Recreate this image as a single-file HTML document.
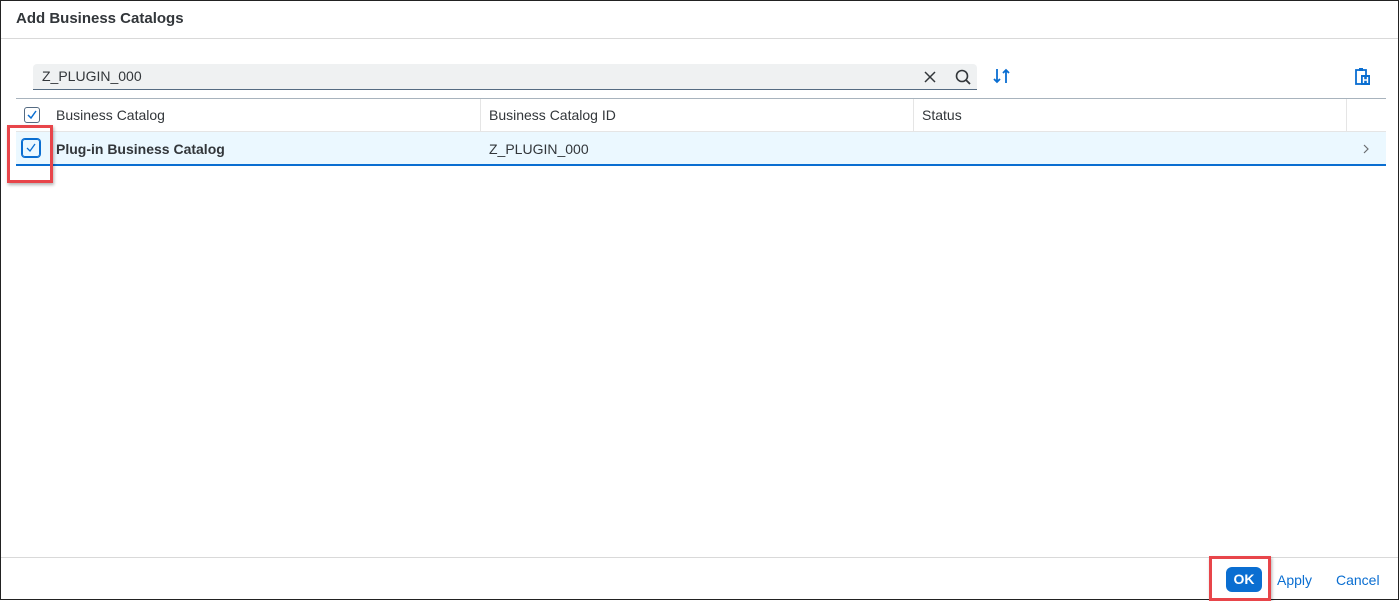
<!DOCTYPE html><html><head><style>
body{margin:0;width:1399px;height:600px;position:relative;background:#fff;font-family:"Liberation Sans",sans-serif;color:#32363a;overflow:hidden}
.a{position:absolute}
</style></head><body>
<div class="a" style="left:0;top:0;width:1397px;height:598px;border:1px solid #222"></div>
<div class="a" style="left:16px;top:10px;font-size:15px;font-weight:bold;color:#32363a">Add Business Catalogs</div>
<div class="a" style="left:1px;top:38px;width:1397px;height:1px;background:#d9d9d9"></div>
<div class="a" style="left:33px;top:64px;width:944px;height:25px;background:#eff1f2;border-bottom:1px solid #556b82;border-radius:4px 4px 0 0"></div>
<div class="a" style="left:42px;top:68px;font-size:14px">Z_PLUGIN_000</div>
<svg class="a" style="left:922px;top:69px" width="16" height="16"><path d="M3 3L13 13M13 3L3 13" stroke="#32363a" stroke-width="1.5"/></svg>
<svg class="a" style="left:954px;top:68px" width="18" height="18"><circle cx="8" cy="8" r="5.5" fill="none" stroke="#32363a" stroke-width="1.6"/><path d="M12 12L16 16" stroke="#32363a" stroke-width="1.8"/></svg>
<svg class="a" style="left:992px;top:66px" width="20" height="20"><path d="M5 3V16M2 13L5 16L8 13M14 17V4M11 7L14 4L17 7" stroke="#0a6ed1" stroke-width="1.8" fill="none"/></svg>
<svg class="a" style="left:1354px;top:67px" width="18" height="20"><rect x="2" y="3" width="10" height="14" fill="none" stroke="#0a6ed1" stroke-width="1.8"/><rect x="5" y="1" width="4" height="3" fill="#0a6ed1"/><rect x="7" y="8" width="9" height="10" fill="#0a6ed1"/><path d="M9.5 10V16M13.5 10V16M9.5 13H13.5" stroke="#fff" stroke-width="1.4"/></svg>
<div class="a" style="left:16px;top:98px;width:1370px;height:1px;background:#a8b3bd"></div>
<div class="a" style="left:16px;top:131px;width:1370px;height:1px;background:#e5e5e5"></div>
<div class="a" style="left:480px;top:99px;width:1px;height:32px;background:#e5e5e5"></div>
<div class="a" style="left:913px;top:99px;width:1px;height:32px;background:#e5e5e5"></div>
<div class="a" style="left:1346px;top:99px;width:1px;height:32px;background:#e5e5e5"></div>
<div class="a" style="left:24px;top:107px;width:14px;height:14px;border:1px solid #556b82;border-radius:3px"></div>
<svg class="a" style="left:26px;top:109px" width="12" height="12"><path d="M2 6L5 9L10 2" stroke="#0a6ed1" stroke-width="1.5" fill="none"/></svg>
<div class="a" style="left:56px;top:107px;font-size:14px">Business Catalog</div>
<div class="a" style="left:489px;top:107px;font-size:14px">Business Catalog ID</div>
<div class="a" style="left:922px;top:107px;font-size:14px">Status</div>
<div class="a" style="left:16px;top:132px;width:1370px;height:32px;background:#ebf8ff;border-bottom:2px solid #0a6ed1"></div>
<div class="a" style="left:22px;top:139px;width:16px;height:16px;border:1px solid #0a6ed1;border-radius:3px;box-shadow:0 0 0 1px #0a6ed1"></div>
<svg class="a" style="left:25px;top:142px" width="12" height="12"><path d="M2 6L5 9L10 2" stroke="#0a6ed1" stroke-width="1.3" fill="none"/></svg>
<div class="a" style="left:56px;top:141px;font-size:14px;font-weight:bold">Plug-in Business Catalog</div>
<div class="a" style="left:489px;top:141px;font-size:14px">Z_PLUGIN_000</div>
<svg class="a" style="left:1361px;top:143px" width="10" height="12"><path d="M3 2L7 6L3 10" stroke="#6a6d70" stroke-width="1.2" fill="none"/></svg>
<div class="a" style="left:7px;top:125px;width:40px;height:52px;border:3px solid #e8454a;box-shadow:1px 2px 3px rgba(0,0,0,.3)"></div>
<div class="a" style="left:1px;top:557px;width:1397px;height:1px;background:#d9d9d9"></div>
<div class="a" style="left:1226px;top:567px;width:36px;height:25px;background:#0a6ed1;border-radius:6px;color:#fff;font-weight:bold;font-size:14px;text-align:center;line-height:25px">OK</div>
<div class="a" style="left:1277px;top:572px;font-size:14px;color:#0a6ed1">Apply</div>
<div class="a" style="left:1336px;top:572px;font-size:14px;color:#0a6ed1">Cancel</div>
<div class="a" style="left:1209px;top:556px;width:56px;height:39px;border:3px solid #e8454a;box-shadow:1px 2px 3px rgba(0,0,0,.3)"></div>
</body></html>
